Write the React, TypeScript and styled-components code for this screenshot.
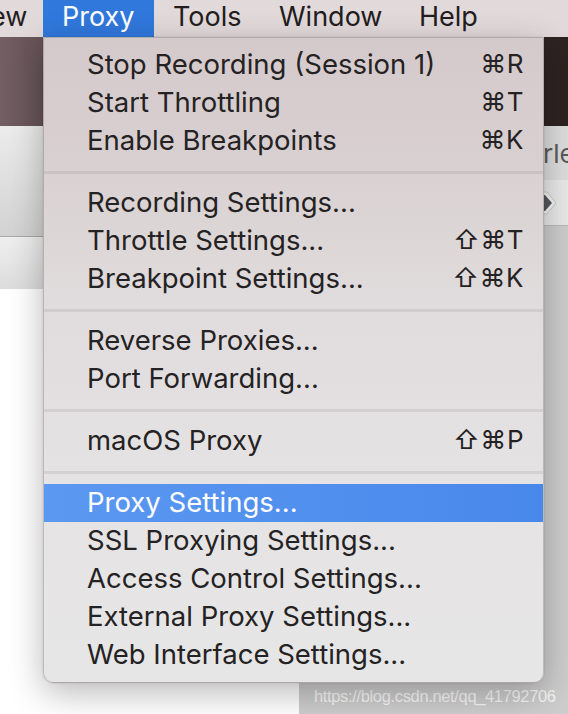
import React from "react";
import styled, { createGlobalStyle } from "styled-components";

const Global = createGlobalStyle`
  html, body { margin: 0; padding: 0; background: #ffffff; }
  body { width: 568px; height: 714px; overflow: hidden; }
`;

const Page = styled.div`
  position: relative;
  width: 568px;
  height: 714px;
  overflow: hidden;
  display: flex;
  flex-direction: column;
  font-family: Inter, "Noto Sans", sans-serif;
`;

const MenuBar = styled.div`
  height: 37px;
  flex: none;
  display: flex;
  align-items: stretch;
  background: #e2d9da;
  font-size: 27px;
  color: #231d1e;
`;

const MenuTitle = styled.div<{ $active?: boolean; $w?: number; $pl?: number }>`
  display: flex;
  align-items: center;
  box-sizing: border-box;
  width: ${(p) => p.$w}px;
  padding-left: ${(p) => p.$pl ?? 0}px;
  padding-bottom: 4px;
  background: ${(p) => (p.$active ? "#3078dc" : "transparent")};
  color: ${(p) => (p.$active ? "#ffffff" : "#231d1e")};
  white-space: nowrap;
  overflow: hidden;
`;

const Clipped = styled.span`
  margin-left: -10px;
`;

const DarkBand = styled.div`
  height: 89px;
  flex: none;
  background: linear-gradient(90deg, #735f64 0%, #5c4a4e 12%, #3e3030 60%, #2c2321 100%);
`;

const Workspace = styled.div`
  flex: 1;
  display: grid;
  grid-template-columns: 299px 1fr;
`;

const LeftPane = styled.div`
  display: flex;
  flex-direction: column;
  background: #ffffff;
`;

const LeftToolbar = styled.div`
  height: 110px;
  background: linear-gradient(180deg, #ececec 0%, #d2d2d2 100%);
  border-bottom: 1px solid #a9a9a9;
`;

const TabStrip = styled.div`
  height: 52px;
  background: linear-gradient(180deg, #efefef 0%, #dcdcdc 100%);
`;

const RightPane = styled.div`
  display: flex;
  flex-direction: column;
  background: #cdcdcd;
`;

const TitleArea = styled.div`
  height: 54px;
  background: #dddddd;
  display: flex;
  align-items: center;
  padding-left: 244px;
  font-size: 26px;
  color: #5a5a5a;
  white-space: nowrap;
  overflow: hidden;
`;

const PathBar = styled.div`
  height: 45px;
  background: #e9e9e9;
  border-bottom: 1px solid #b9b9b9;
  display: flex;
  align-items: center;
  padding-left: 238px;
`;

const Watermark = styled.div`
  margin-top: auto;
  padding: 0 0 8px 15px;
  font-family: "Liberation Sans", Arial, sans-serif;
  font-size: 16.5px;
  letter-spacing: -0.35px;
  color: rgba(255, 255, 255, 0.85);
  white-space: nowrap;
`;

const Menu = styled.div`
  position: absolute;
  left: 43px;
  top: 37px;
  width: 501px;
  box-sizing: border-box;
  padding: 8px 0 8px;
  border: 1px solid rgba(0, 0, 0, 0.18);
  border-top-color: rgba(0, 0, 0, 0.25);
  border-radius: 0 0 10px 10px;
  background: linear-gradient(
    180deg,
    #d5cacb 0%,
    #d8cfd0 18%,
    #e0dbdc 40%,
    #e5e3e4 70%,
    #e7e6e6 100%
  );
  box-shadow: 0 10px 34px rgba(0, 0, 0, 0.28), 0 0 2px rgba(0, 0, 0, 0.15);
  font-size: 27.5px;
  color: #242223;
`;

const Item = styled.div<{ $selected?: boolean }>`
  height: 38px;
  display: flex;
  align-items: center;
  justify-content: space-between;
  padding: 0 19px 3px 43px;
  box-sizing: border-box;
  background: ${(p) => (p.$selected ? "linear-gradient(90deg, #5a98f1 0%, #4988eb 100%)" : "transparent")};
  color: ${(p) => (p.$selected ? "#ffffff" : "#242223")};
  white-space: nowrap;
`;

const Shortcut = styled.span`
  font-family: Inter, "DejaVu Sans", sans-serif;
  font-size: 26px;
  letter-spacing: 0.5px;
`;

const Separator = styled.div`
  height: 24px;
  display: flex;
  align-items: center;
  &::after {
    content: "";
    display: block;
    width: 100%;
    height: 3px;
    background: rgba(60, 40, 45, 0.09);
  }
`;

type Entry = { label: string; key?: string; selected?: boolean } | "sep";

const entries: Entry[] = [
  { label: "Stop Recording (Session 1)", key: "⌘R" },
  { label: "Start Throttling", key: "⌘T" },
  { label: "Enable Breakpoints", key: "⌘K" },
  "sep",
  { label: "Recording Settings..." },
  { label: "Throttle Settings...", key: "⇧⌘T" },
  { label: "Breakpoint Settings...", key: "⇧⌘K" },
  "sep",
  { label: "Reverse Proxies..." },
  { label: "Port Forwarding..." },
  "sep",
  { label: "macOS Proxy", key: "⇧⌘P" },
  "sep",
  { label: "Proxy Settings...", selected: true },
  { label: "SSL Proxying Settings..." },
  { label: "Access Control Settings..." },
  { label: "External Proxy Settings..." },
  { label: "Web Interface Settings..." },
];

const Hexagon = () => (
  <svg width="22" height="28" viewBox="0 0 22 28">
    <path d="M0 3 H10 L19 14 L10 25 H0 Z" fill="#f4f4f4" stroke="#c8c8c8" strokeWidth="1" />
    <path d="M0 6 H8 L15 14 L8 22 H0 Z" fill="#55565d" />
  </svg>
);

export default function App() {
  return (
    <>
      <Global />
      <Page>
        <MenuBar>
          <MenuTitle $w={43}>
            <Clipped>ew</Clipped>
          </MenuTitle>
          <MenuTitle $active $w={111} $pl={19}>
            Proxy
          </MenuTitle>
          <MenuTitle $w={106} $pl={19}>
            Tools
          </MenuTitle>
          <MenuTitle $w={140} $pl={19}>
            Window
          </MenuTitle>
          <MenuTitle $w={120} $pl={19}>
            Help
          </MenuTitle>
        </MenuBar>
        <DarkBand />
        <Workspace>
          <LeftPane>
            <LeftToolbar />
            <TabStrip />
          </LeftPane>
          <RightPane>
            <TitleArea>rle</TitleArea>
            <PathBar>
              <Hexagon />
            </PathBar>
            <Watermark>https://blog.csdn.net/qq_41792706</Watermark>
          </RightPane>
        </Workspace>
        <Menu>
          {entries.map((e, i) =>
            e === "sep" ? (
              <Separator key={i} />
            ) : (
              <Item key={i} $selected={e.selected}>
                <span>{e.label}</span>
                {e.key && <Shortcut>{e.key}</Shortcut>}
              </Item>
            )
          )}
        </Menu>
      </Page>
    </>
  );
}
